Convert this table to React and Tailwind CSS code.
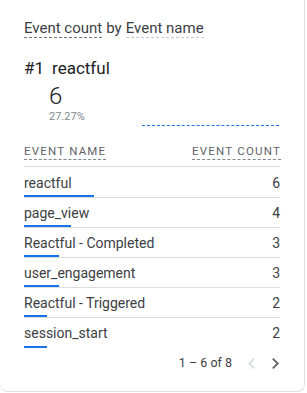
const rows = [
  { name: "reactful", count: 6 },
  { name: "page_view", count: 4 },
  { name: "Reactful - Completed", count: 3 },
  { name: "user_engagement", count: 3 },
  { name: "Reactful - Triggered", count: 2 },
  { name: "session_start", count: 2 },
];

const ChevronLeft = ({ className }) => (
  <svg viewBox="0 0 10 14" className={className} fill="none" stroke="currentColor" strokeWidth="2">
    <path d="M8 1.5 L2.5 7 L8 12.5" />
  </svg>
);

const ChevronRight = ({ className }) => (
  <svg viewBox="0 0 10 14" className={className} fill="none" stroke="currentColor" strokeWidth="2">
    <path d="M2 1.5 L7.5 7 L2 12.5" />
  </svg>
);

export default function App() {
  const max = 6;
  return (
    <div className="w-[307px] h-[393px] bg-white font-['Roboto',sans-serif] overflow-hidden">
      <div className="w-[305px] h-[392px] border-r border-b border-[#e0e0e0] rounded-b-[8px] bg-white">
        <div className="px-6 pt-[19px]">
          <div className="text-[15px] leading-[18px] text-[#3c4043] flex gap-[4px]">
            <span className="border-b border-dashed border-[#70757a]">Event count</span>
            <span>by</span>
            <span className="border-b border-dashed border-[#c8cacd]">Event name</span>
          </div>

          <div className="mt-[18px] text-[17px] leading-[24px] text-[#202124] flex gap-[8px]">
            <span>#1</span>
            <span>reactful</span>
          </div>
          <div className="pl-[25px] mt-[2px]">
            <div className="text-[24px] leading-[28px] font-light text-[#202124]">6</div>
            <div className="text-[11px] leading-[14px] text-[#80868b]">27.27%</div>
          </div>
          <div className="mt-[1px] ml-[118px] w-[137px] border-t border-dashed border-[#1a73e8]"></div>

          <div className="mt-[18px] flex justify-between border-b border-[#dadce0] pb-[6px] text-[11.5px] leading-[14px] tracking-[1.2px] text-[#5f6368]">
            <span className="border-b border-dashed border-[#80868b] pb-[1px]">EVENT NAME</span>
            <span className="border-b border-dashed border-[#80868b] pb-[1px] -mr-[1px]">EVENT COUNT</span>
          </div>

          <div className="pt-[1px]">
            {rows.map((r, i) => (
              <div
                key={r.name}
                className={`h-[30px] flex flex-col ${i < rows.length - 1 ? "border-b border-[#dadce0]" : ""}`}
              >
                <div className="pt-[7px] flex justify-between text-[14px] leading-[16px] text-[#3c4043]">
                  <span>{r.name}</span>
                  <span>{r.count}</span>
                </div>
                <div className="mt-auto h-[2px] bg-[#1a73e8]" style={{ width: `${(r.count / max) * 70}px` }}></div>
              </div>
            ))}
          </div>

          <div className="mt-[7px] flex items-center justify-end text-[12.5px] leading-[16px] text-[#3c4043]">
            <span>1 – 6 of 8</span>
            <ChevronLeft className="ml-[15px] w-[9px] h-[13px] text-[#dadce0]" />
            <ChevronRight className="ml-[15px] w-[9px] h-[13px] text-[#5f6368]" />
          </div>
        </div>
      </div>
    </div>
  );
}
